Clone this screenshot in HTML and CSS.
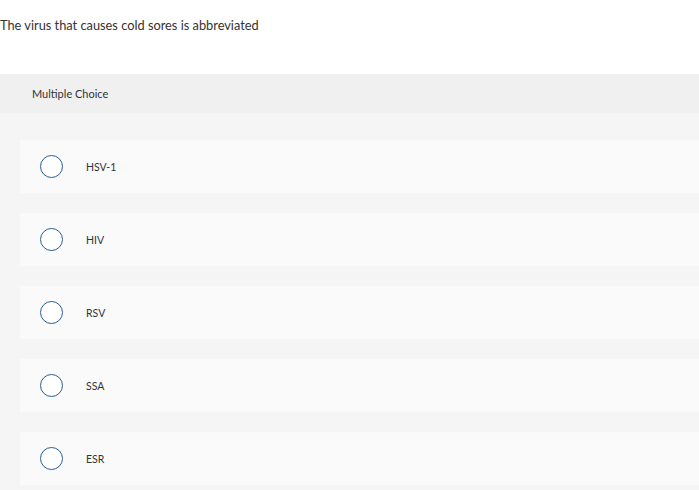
FILE: index.html
```html
<!DOCTYPE html>
<html lang="en">
<head>
<meta charset="utf-8">
<title>Multiple Choice</title>
<link rel="stylesheet" href="styles.css">
</head>
<body>
<div class="question">The virus that causes cold sores is abbreviated</div>
<div class="qtype">Multiple Choice</div>
<div class="choices">
  <label class="choice"><span class="radio"></span><span class="label">HSV-1</span></label>
  <label class="choice"><span class="radio"></span><span class="label">HIV</span></label>
  <label class="choice"><span class="radio"></span><span class="label">RSV</span></label>
  <label class="choice"><span class="radio"></span><span class="label">SSA</span></label>
  <label class="choice"><span class="radio"></span><span class="label">ESR</span></label>
</div>
</body>
</html>
```

FILE: styles.css
```css
html, body {
  margin: 0;
  padding: 0;
  background: #ffffff;
  font-family: "Lato", "Liberation Sans", sans-serif;
  color: #333333;
}
.question {
  height: 74px;
  box-sizing: border-box;
  padding-top: 16px;
  font-size: 12.8px;
  line-height: 18px;
}
.qtype {
  height: 39px;
  background: #f0f0f0;
  display: flex;
  align-items: center;
  padding-left: 32px;
  font-size: 11px;
}
.choices {
  background: #f5f5f5;
  display: flex;
  flex-direction: column;
  gap: 20px;
  padding: 27px 0 6px 20px;
}
.choice {
  height: 53px;
  background: #fafafa;
  display: flex;
  align-items: center;
  padding-left: 20px;
  font-size: 10.5px;
}
.radio {
  width: 21px;
  height: 21px;
  border: 1.2px solid #2a5d93;
  border-radius: 50%;
  background: #ffffff;
  flex: none;
}
.label {
  margin-left: 23px;
}
```
